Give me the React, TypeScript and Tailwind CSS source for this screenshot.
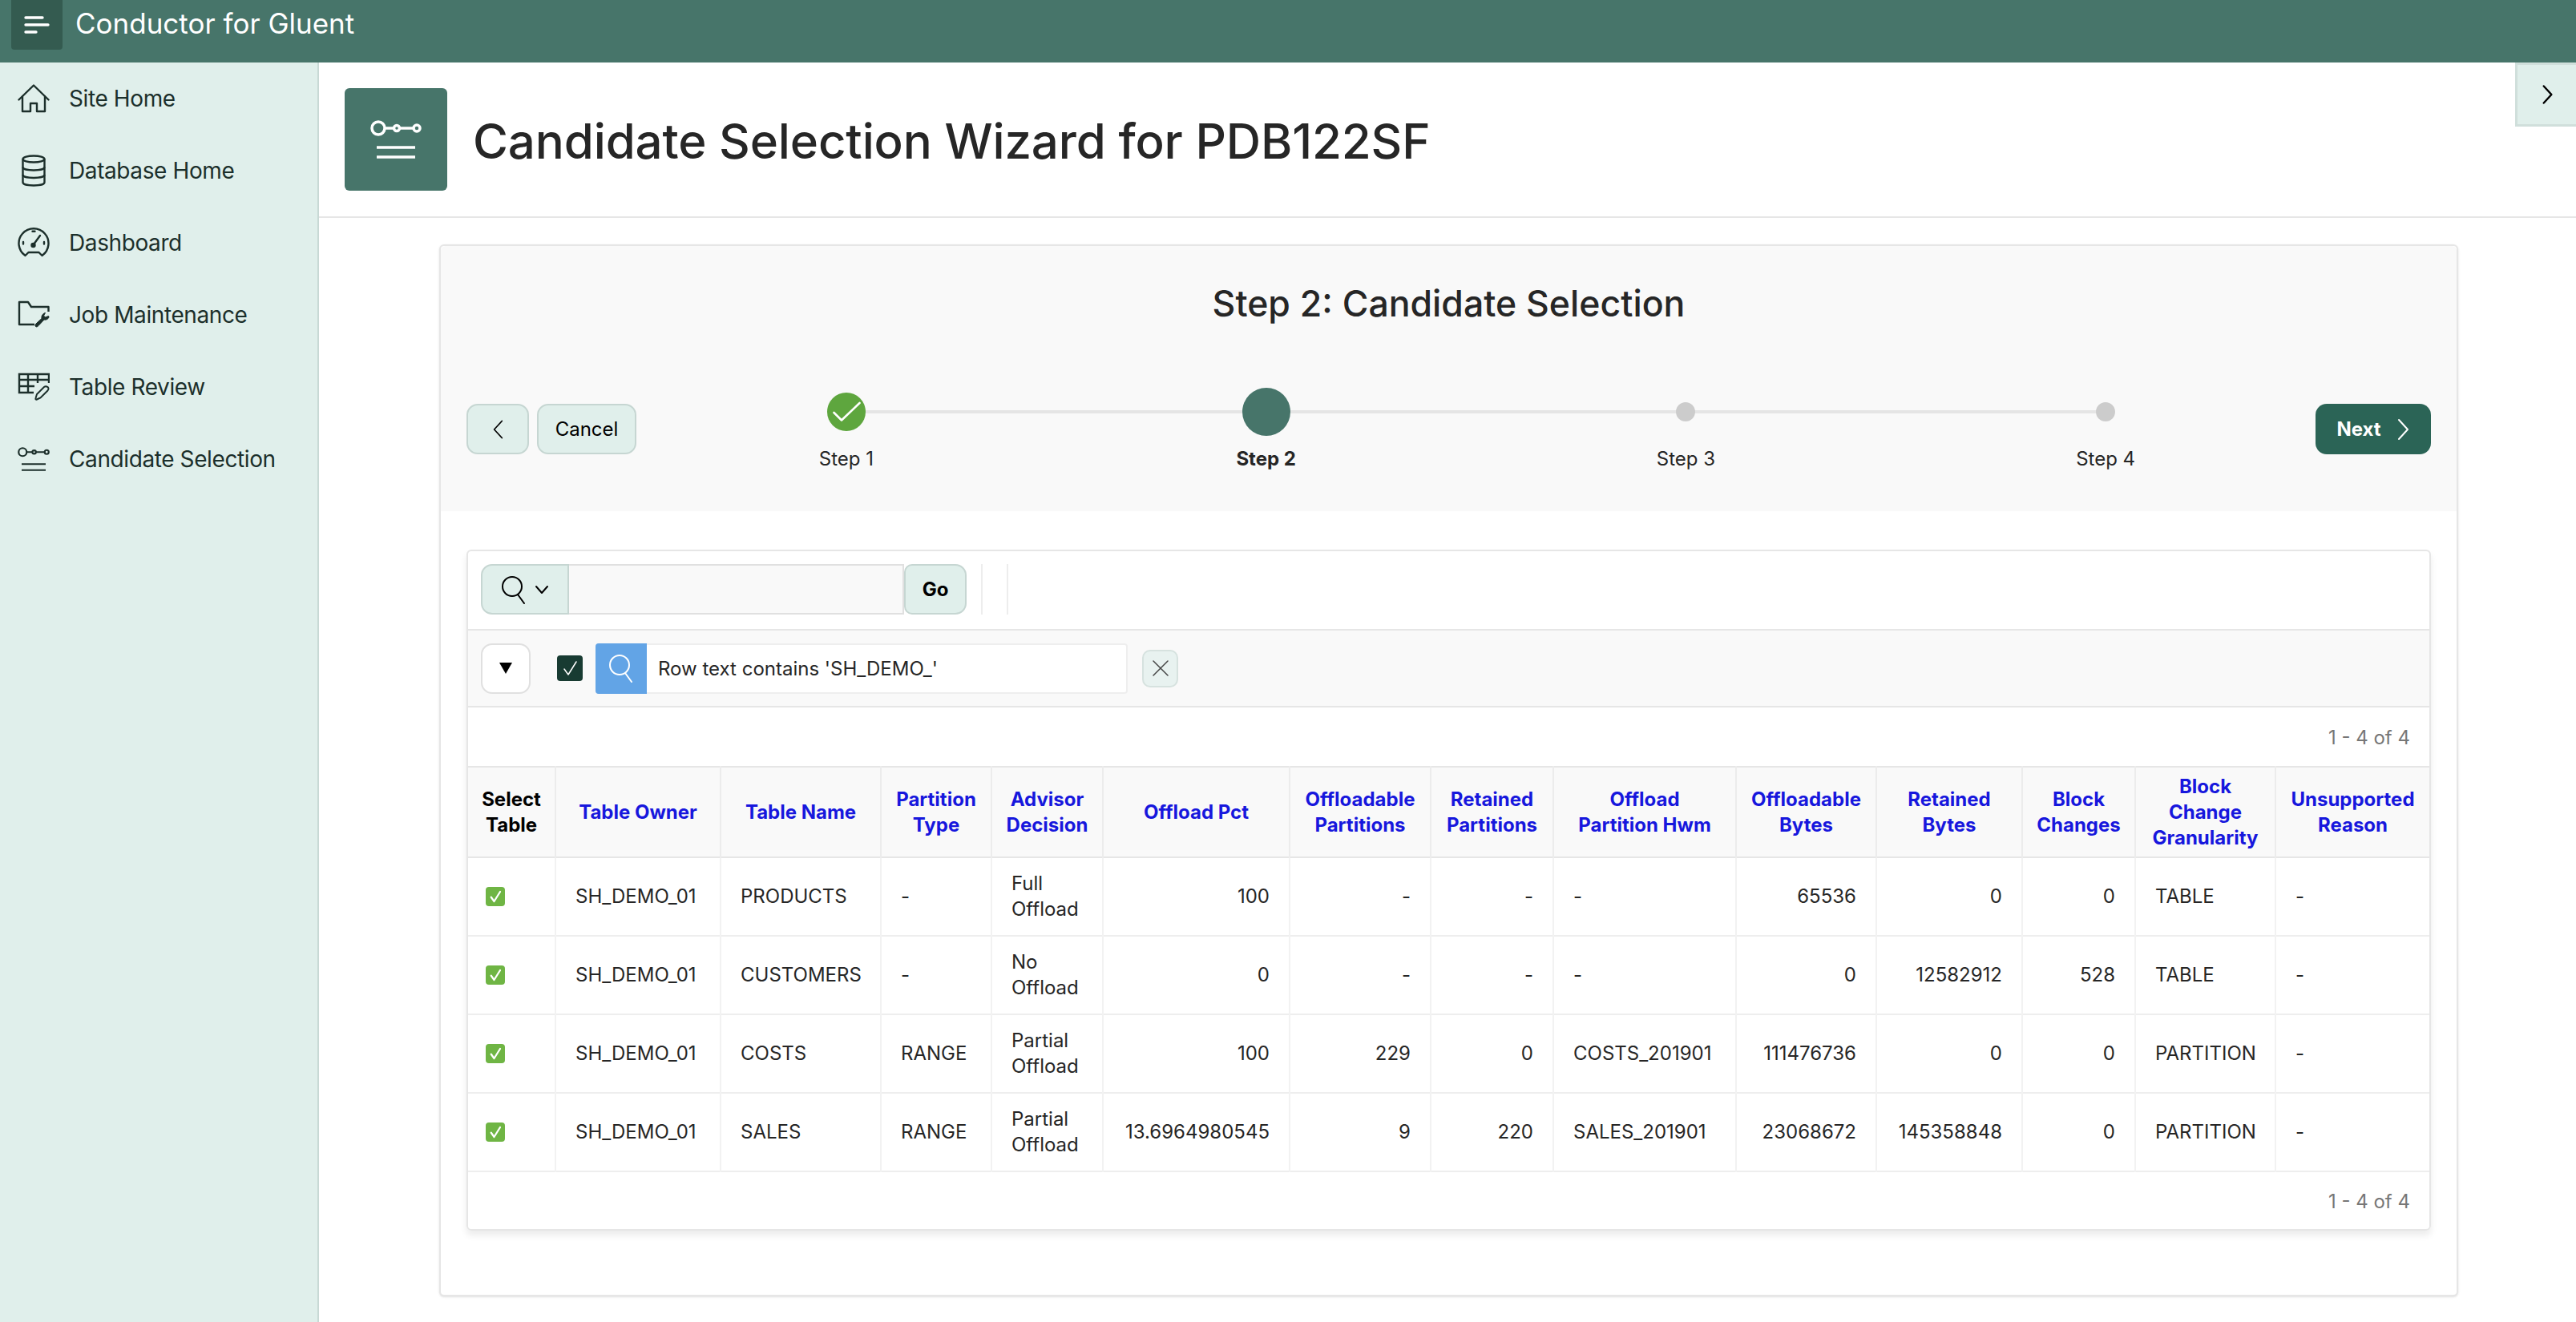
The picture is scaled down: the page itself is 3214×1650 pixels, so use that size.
import type { ReactNode } from 'react'

const navItems: { label: string; icon: ReactNode }[] = [
  { label: 'Site Home', icon: <HomeIcon /> },
  { label: 'Database Home', icon: <DatabaseIcon /> },
  { label: 'Dashboard', icon: <GaugeIcon /> },
  { label: 'Job Maintenance', icon: <FolderWrenchIcon /> },
  { label: 'Table Review', icon: <TableEditIcon /> },
  { label: 'Candidate Selection', icon: <SelectionIcon className="w-10 h-[30px] text-[#1c2f2b]" /> },
]

const columns = [
  { title: 'Select\nTable', width: 'w-[109px]', plain: true },
  { title: 'Table Owner', width: 'w-[206px]' },
  { title: 'Table Name', width: 'w-[200px]' },
  { title: 'Partition\nType', width: 'w-[138px]' },
  { title: 'Advisor\nDecision', width: 'w-[139px]' },
  { title: 'Offload Pct', width: 'w-[233px]', right: true },
  { title: 'Offloadable\nPartitions', width: 'w-[176px]', right: true },
  { title: 'Retained\nPartitions', width: 'w-[153px]', right: true },
  { title: 'Offload\nPartition Hwm', width: 'w-[228px]' },
  { title: 'Offloadable\nBytes', width: 'w-[175px]', right: true },
  { title: 'Retained\nBytes', width: 'w-[182px]', right: true },
  { title: 'Block\nChanges', width: 'w-[141px]', right: true },
  { title: 'Block\nChange\nGranularity', width: 'w-[175px]' },
  { title: 'Unsupported\nReason', width: 'w-[192px]' },
]

const rows = [
  ['SH_DEMO_01', 'PRODUCTS', '-', 'Full\nOffload', '100', '-', '-', '-', '65536', '0', '0', 'TABLE', '-'],
  ['SH_DEMO_01', 'CUSTOMERS', '-', 'No\nOffload', '0', '-', '-', '-', '0', '12582912', '528', 'TABLE', '-'],
  ['SH_DEMO_01', 'COSTS', 'RANGE', 'Partial\nOffload', '100', '229', '0', 'COSTS_201901', '111476736', '0', '0', 'PARTITION', '-'],
  ['SH_DEMO_01', 'SALES', 'RANGE', 'Partial\nOffload', '13.6964980545', '9', '220', 'SALES_201901', '23068672', '145358848', '0', 'PARTITION', '-'],
]

const steps = ['Step 1', 'Step 2', 'Step 3', 'Step 4']

function HomeIcon() {
  return (
    <svg viewBox="0 0 40 36" className="w-10 h-9" fill="none" stroke="#1c2f2b" strokeWidth="2.4" strokeLinejoin="round" strokeLinecap="round">
      <path d="M1.5 19.5 20 1.5l18.500 18" />
      <path d="M6 15.500V34h10V24h8v10h10V15.500" />
    </svg>
  )
}

function DatabaseIcon() {
  return (
    <svg viewBox="0 0 30 40" className="w-[30px] h-10" fill="none" stroke="#1c2f2b" strokeWidth="2.400">
      <ellipse cx="15" cy="5.500" rx="13.500" ry="4" />
      <path d="M1.500 5.500v29c0 2.500 6 4 13.500 4s13.500-1.500 13.500-4v-29" />
      <path d="M1.500 15.500c0 2.500 6 4 13.500 4s13.500-1.500 13.500-4" />
      <path d="M1.500 25c0 2.500 6 4 13.500 4s13.500-1.500 13.500-4" />
    </svg>
  )
}

function GaugeIcon() {
  return (
    <svg viewBox="0 0 40 40" className="w-10 h-10" fill="none" stroke="#1c2f2b" strokeWidth="2.400" strokeLinecap="round" strokeLinejoin="round">
      <path d="M9.500 36A18.500 18.500 0 1 1 30.500 36L26.500 32h-13Z" />
      <circle cx="19.500" cy="23" r="2" fill="#1c2f2b" />
      <path d="m20 22 8-11" />
      <path d="M18.500 5.800h3M7 19v2.500M33 19v2.500" />
    </svg>
  )
}

function FolderWrenchIcon() {
  return (
    <svg viewBox="0 0 40 36" className="w-10 h-9" fill="none" stroke="#1c2f2b" strokeWidth="2.400" strokeLinejoin="round">
      <path d="M21 30H2V2h11l4 6h21.500v6" />
      <path
        d="M39 21c-1 2.500-3.500 3.500-6 3l-7 7.500c-1 1-2.500 2-3.500 1s-.5-2.500.5-3.500l7-6.500c-.5-2.500.5-5 3-6.500l1.500-.5-2 3.500 2 2 4-1.500.5 1Z"
        fill="#1c2f2b"
        strokeWidth="1"
      />
    </svg>
  )
}

function TableEditIcon() {
  return (
    <svg viewBox="0 0 40 36" className="w-10 h-9" fill="none" stroke="#1c2f2b" strokeWidth="2.400">
      <path d="M20 25H2V2h37v11" />
      <path d="M2 9h37M2 17h19M13 2v23M25 2v11" />
      <path d="M24 33.500c-1 .500-2 0-1.500-1.500l1.500-5 9-9c2-1.500 5-.5 5.500 1.500.3 1-.2 2-1 3l-9 9-4.500 2Z" strokeWidth="2" />
    </svg>
  )
}

function SelectionIcon({ className }: { className: string }) {
  return (
    <svg viewBox="0 0 64 48" className={className} fill="none" stroke="currentColor" strokeWidth="3.500">
      <circle cx="10" cy="10" r="8" />
      <circle cx="33" cy="10" r="3.500" />
      <circle cx="58" cy="10" r="4" />
      <path d="M18 10h11.500M36.500 10H54M8 34h48M8 46h48" />
    </svg>
  )
}

function Chevron({ dir, className, weight = 2 }: { dir: 'left' | 'right'; className: string; weight?: number }) {
  return (
    <svg viewBox="0 0 16 28" className={className} fill="none" stroke="currentColor" strokeWidth={weight} strokeLinecap="round" strokeLinejoin="round">
      <path d={dir === 'left' ? 'M14 2 3 14l11 12' : 'M2 2l11 12L2 26'} />
    </svg>
  )
}

function Magnifier({ className }: { className: string }) {
  return (
    <svg viewBox="0 0 32 36" className={className} fill="none" stroke="currentColor" strokeWidth="2" strokeLinecap="round">
      <circle cx="14" cy="14" r="12" />
      <path d="m21 24 8 11" />
    </svg>
  )
}

function CheckTick({ className }: { className: string }) {
  return (
    <svg viewBox="0 0 24 24" className={className} fill="none" stroke="currentColor" strokeWidth="2" strokeLinecap="round" strokeLinejoin="round">
      <path d="m5 13 5 7L20 4" />
    </svg>
  )
}

function SelectedBox() {
  return (
    <div className="w-6 h-6 rounded-[4px] bg-[#6fb544] flex items-center justify-center text-white">
      <CheckTick className="w-[18px] h-[18px] stroke-[3]" />
    </div>
  )
}

export default function App() {
  return (
    <div className="h-screen overflow-hidden flex flex-col bg-white font-[Inter,sans-serif] text-[#262626]">
      {/* Top bar */}
      <header className="h-[78px] shrink-0 bg-[#47756a] flex items-start pl-[14px] text-white">
        <button className="w-16 h-[62px] bg-[#345b50] rounded-b-[4px] flex items-center justify-center">
          <svg viewBox="0 0 32 24" className="w-8 h-6" stroke="white" strokeWidth="3.400" strokeLinecap="round">
            <path d="M2 3h21M2 12h28M2 21h13" />
          </svg>
        </button>
        <span className="ml-[16px] text-[35px] leading-[58px]">Conductor for Gluent</span>
      </header>

      <div className="flex-1 flex min-h-0">
        {/* Side nav */}
        <nav className="w-[398px] shrink-0 bg-[#e0efeb] border-r-2 border-[#c8d9d5]">
          {navItems.map((item) => (
            <div key={item.label} className="h-[90px] flex items-center pl-[22px] text-[#1c2f2b]">
              <span className="w-10 flex justify-center">{item.icon}</span>
              <span className="ml-[24px] text-[28px] tracking-[-0.4px]">{item.label}</span>
            </div>
          ))}
        </nav>

        {/* Main */}
        <main className="relative flex-1 min-w-0">
          <div className="h-[194px] border-b-2 border-[#e6e6e6] flex items-center pl-[32px]">
            <div className="w-32 h-32 rounded-[6px] bg-[#47756a] flex items-center justify-center text-white">
              <SelectionIcon className="w-16 h-12" />
            </div>
            <h1 className="ml-[32px] mt-[3px] text-[60px] leading-none font-medium tracking-[-0.15px] text-[#262626]">Candidate Selection Wizard for PDB122SF</h1>
          </div>

          <button className="absolute top-0 right-0 w-[76px] h-[80px] bg-[#e0efeb] border-l-[3px] border-y-[3px] border-[#d0dfdb] flex items-center justify-center pl-[3px] text-black">
            <Chevron dir="right" className="w-[14px] h-[26px]" weight={2.800} />
          </button>

          {/* Wizard card */}
          <div className="mt-[33px] ml-[150px] w-[2519px] h-[1313px] rounded-[6px] border-2 border-[#e6e6e6] bg-white shadow-sm">
            <div className="h-[331px] bg-[#f9f9f9] rounded-t-[6px]">
              <h2 className="pt-[42px] text-center text-[44.6px] leading-[60px] font-medium">Step 2: Candidate Selection</h2>
              <div className="mt-[75px] flex items-start pl-[32px] pr-[32px]">
                <div className="flex gap-[10px] mt-[20px] shrink-0">
                  <button className="w-[78px] h-[63px] rounded-[14px] bg-[#e0efeb] border-2 border-[#c6d6d2] flex items-center justify-center text-black">
                    <Chevron dir="left" className="w-[14px] h-[26px]" />
                  </button>
                  <button className="w-[124px] h-[63px] rounded-[14px] bg-[#e0efeb] border-2 border-[#c6d6d2] text-[24px] text-black">Cancel</button>
                </div>
                <div className="flex-1 flex">
                  {steps.map((step, i) => (
                    <div key={step} className="relative flex-1 flex flex-col items-center">
                      {i < 3 && <div className="absolute top-[28px] left-1/2 w-full h-1 bg-[#e5e5e5]" />}
                      <div className="relative h-[60px] flex items-center justify-center">
                        {i === 0 && (
                          <svg viewBox="0 0 48 48" className="w-12 h-12">
                            <circle cx="24" cy="24" r="24" fill="#5ea63e" />
                            <path d="m8.500 25 9.500 9.500L40.500 13" fill="none" stroke="white" strokeWidth="2.600" strokeLinecap="round" strokeLinejoin="round" />
                          </svg>
                        )}
                        {i === 1 && <div className="w-[60px] h-[60px] rounded-full bg-[#47756a]" />}
                        {i > 1 && <div className="w-6 h-6 rounded-full bg-[#cccccc]" />}
                      </div>
                      <span className={`mt-[14px] text-[24px] leading-[30px] ${i === 1 ? 'font-bold' : ''}`}>{step}</span>
                    </div>
                  ))}
                </div>
                <button className="mt-[20px] w-[144px] h-[63px] shrink-0 rounded-[14px] bg-[#2b6456] text-white text-[24px] font-bold flex items-center justify-center gap-[20px]">
                  Next
                  <Chevron dir="right" className="w-4 h-7" />
                </button>
              </div>
            </div>

            {/* Report region */}
            <div className="mt-[48px] ml-[32px] w-[2451px] h-[850px] rounded-[6px] border-2 border-[#e6e6e6] shadow-[0_6px_8px_rgba(0,0,0,0.08)]">
              <div className="h-[97px] flex items-start pt-[16px] pl-[16px]">
                <div className="flex h-[63px] w-[606px]">
                  <button className="w-[110px] rounded-l-[14px] bg-[#e0efeb] border-2 border-[#c6d6d2] flex items-center justify-center gap-[10px] text-black">
                    <Magnifier className="w-[32px] h-[36px]" />
                    <svg viewBox="0 0 18 12" className="w-[18px] h-3" fill="none" stroke="currentColor" strokeWidth="2" strokeLinecap="round" strokeLinejoin="round">
                      <path d="m2 2 7 8 7-8" />
                    </svg>
                  </button>
                  <div className="flex-1 bg-[#f9f9f9] border-y-2 border-r-2 border-[#e0e0e0]" />
                  <button className="w-[78px] rounded-r-[14px] rounded-l-[10px] bg-[#e0efeb] border-2 border-[#c6d6d2] text-[24px] font-bold text-black">Go</button>
                </div>
                <div className="ml-[18px] h-[63px] w-[34px] border-x-2 border-[#ededed]" />
              </div>

              <div className="h-[98px] bg-[#f9f9f9] border-y-2 border-[#e6e6e6] flex items-center pl-[16px]">
                <button className="w-[62px] h-[63px] rounded-[14px] bg-white border-2 border-[#e0e0e0] flex items-center justify-center">
                  <svg viewBox="0 0 18 16" className="w-[18px] h-4" fill="black">
                    <path d="M1 1h16L9 15Z" />
                  </svg>
                </button>
                <div className="ml-[33px] w-8 h-8 rounded-[4px] bg-[#183b32] flex items-center justify-center text-white">
                  <CheckTick className="w-6 h-6 stroke-[1.500]" />
                </div>
                <div className="ml-[16px] w-[664px] h-[63px] flex rounded-[4px] border-2 border-l-0 border-[#eeeeee] bg-white">
                  <div className="w-[64px] -my-[2px] rounded-l-[4px] bg-[#62a4e6] flex items-center justify-center text-white">
                    <Magnifier className="w-[32px] h-[36px]" />
                  </div>
                  <span className="pl-[14px] text-[24px] leading-[59px]">Row text contains 'SH_DEMO_'</span>
                </div>
                <button className="ml-[18px] w-[45px] h-[47px] rounded-[10px] bg-[#e8f2f0] border-2 border-[#d6e2df] flex items-center justify-center text-[#444]">
                  <svg viewBox="0 0 24 24" className="w-6 h-6" fill="none" stroke="currentColor" strokeWidth="1.500" strokeLinecap="round">
                    <path d="m3 3 18 18M21 3 3 21" />
                  </svg>
                </button>
              </div>

              <div className="h-[73px] flex items-center justify-end pr-[24px] pt-[2px] text-[24px] text-[#777]">1 - 4 of 4</div>

              <table className="table-fixed w-[2447px] border-collapse text-[24px] leading-[32px]">
                <colgroup>
                  {columns.map((col) => (
                    <col key={col.title} className={col.width} />
                  ))}
                </colgroup>
                <thead>
                  <tr className="h-[113px] bg-[#f9f9f9] border-y-2 border-[#e6e6e6]">
                    {columns.map((col) => (
                      <th
                        key={col.title}
                        className={`border-x-2 first:border-l-0 last:border-r-0 border-[#ececec] px-1 font-bold text-center whitespace-pre-line ${col.plain ? 'text-black' : 'text-[#1717dd]'}`}
                      >
                        {col.title}
                      </th>
                    ))}
                  </tr>
                </thead>
                <tbody>
                  {rows.map((row) => (
                    <tr key={row[1]} className="h-[98px] border-b-2 border-[#eeeeee]">
                      <td className="pl-[22px] border-r-2 border-[#f2f2f2]">
                        <SelectedBox />
                      </td>
                      {row.map((cell, i) => (
                        <td
                          key={i}
                          className={`px-6 whitespace-pre-line border-r-2 last:border-r-0 border-[#f2f2f2] ${columns[i + 1].right ? 'text-right' : 'text-left'}`}
                        >
                          {cell}
                        </td>
                      ))}
                    </tr>
                  ))}
                </tbody>
              </table>

              <div className="h-[73px] flex items-center justify-end pr-[24px] text-[24px] text-[#777]">1 - 4 of 4</div>
            </div>
          </div>
        </main>
      </div>
    </div>
  )
}
